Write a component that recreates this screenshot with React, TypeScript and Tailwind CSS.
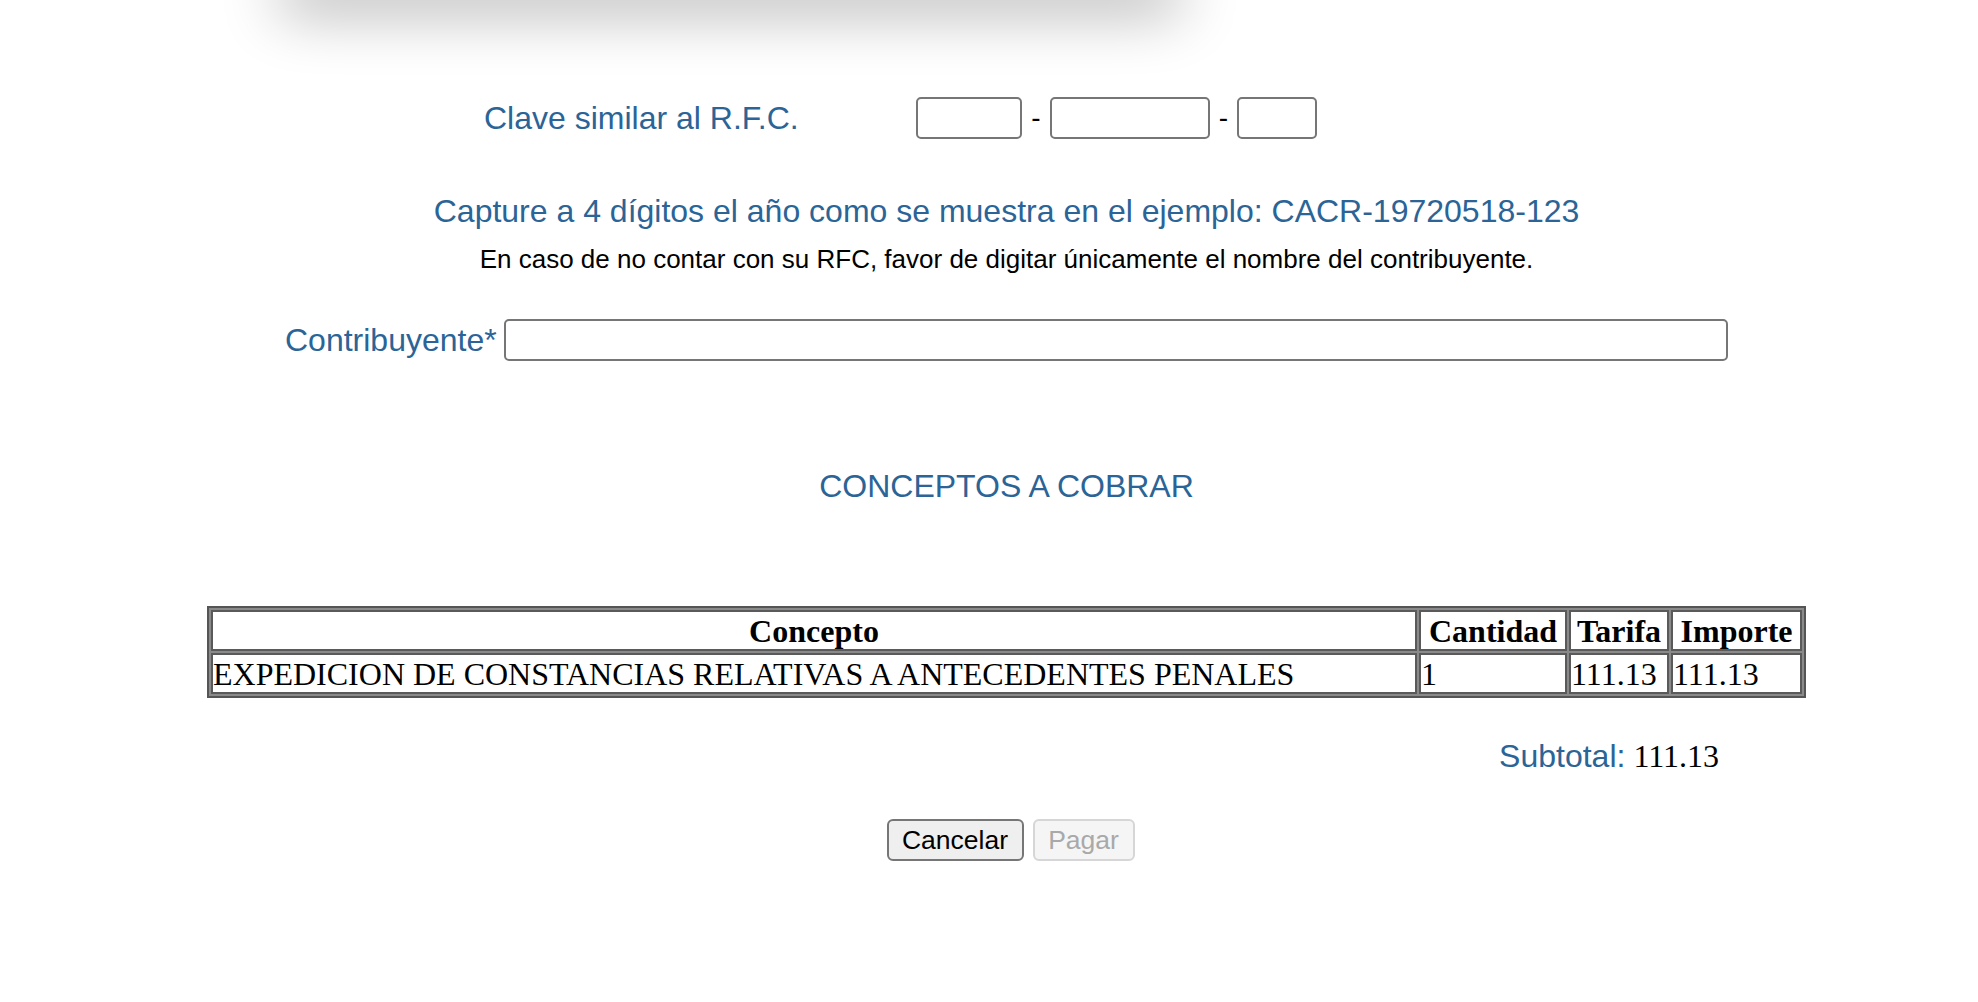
const sans = "font-['Liberation_Sans',Arial,sans-serif]";
const serif = "font-['Liberation_Serif','Times_New_Roman',serif]";

const conceptos = [
  {
    concepto: "EXPEDICION DE CONSTANCIAS RELATIVAS A ANTECEDENTES PENALES",
    cantidad: "1",
    tarifa: "111.13",
    importe: "111.13",
  },
];

function RfcInputs() {
  return (
    <div className="flex items-center">
      <input type="text" className="w-[106px] h-[42px] border-2 border-[#767676] rounded-[5px] bg-white" />
      <span className={`${sans} w-[28px] text-center text-[28px] text-black`}>-</span>
      <input type="text" className="w-[160px] h-[42px] border-2 border-[#767676] rounded-[5px] bg-white" />
      <span className={`${sans} w-[27px] text-center text-[28px] text-black`}>-</span>
      <input type="text" className="w-[80px] h-[42px] border-2 border-[#767676] rounded-[5px] bg-white" />
    </div>
  );
}

export default function App() {
  return (
    <div className={`min-h-screen bg-white overflow-hidden ${sans}`}>
      {/* card above the fold, only its shadow shows */}
      <div className="ml-[280px] w-[900px] h-[40px] -mt-[40px] bg-white shadow-[0_12px_60px_rgba(0,0,0,0.32)]" />

      <div className="pl-[35px]">
        {/* Clave RFC */}
        <div className="mt-[97px] h-[42px] flex items-center pl-[449px]">
          <label className="w-[432px] text-[32px] text-[#2b6496] leading-none">Clave similar al R.F.C.</label>
          <RfcInputs />
        </div>

        <p className="mt-[54px] text-center text-[32px] leading-[36px] text-[#2b6496]">
          Capture a 4 dígitos el año como se muestra en el ejemplo: CACR-19720518-123
        </p>
        <p className="mt-[15px] text-center text-[26px] leading-[30px] text-black">
          En caso de no contar con su RFC, favor de digitar únicamente el nombre del contribuyente.
        </p>

        {/* Contribuyente */}
        <div className="mt-[45px] w-[1443px] mx-auto h-[42px] flex items-center gap-[7px]">
          <label className="text-[32px] text-[#2b6496] leading-none">Contribuyente*</label>
          <input type="text" className="flex-1 h-[42px] border-2 border-[#767676] rounded-[5px] bg-white" />
        </div>

        <h2 className="mt-[107px] text-center text-[32px] leading-[36px] text-[#2b6496]">CONCEPTOS A COBRAR</h2>

        <div className="mt-[102px] w-[1599px] mx-auto">
          <table className={`${serif} w-full border-separate border-spacing-[2px] border-2 border-[#555555] bg-[#8a8a8a] text-[32px] text-black`}>
            <thead>
              <tr className="h-[41px]">
                <th className="bg-white border-2 border-[#5a5a5a] font-bold leading-[36px] px-0">Concepto</th>
                <th className="w-[148px] bg-white border-2 border-[#5a5a5a] font-bold leading-[36px] px-0">Cantidad</th>
                <th className="w-[100px] bg-white border-2 border-[#5a5a5a] font-bold leading-[36px] px-0">Tarifa</th>
                <th className="w-[131px] bg-white border-2 border-[#5a5a5a] font-bold leading-[36px] px-0">Importe</th>
              </tr>
            </thead>
            <tbody>
              {conceptos.map((c) => (
                <tr key={c.concepto} className="h-[41px]">
                  <td className="bg-white border-2 border-[#5a5a5a] leading-[36px] px-0 text-left">{c.concepto}</td>
                  <td className="bg-white border-2 border-[#5a5a5a] leading-[36px] px-0 text-left">{c.cantidad}</td>
                  <td className="bg-white border-2 border-[#5a5a5a] leading-[36px] px-0 text-left">{c.tarifa}</td>
                  <td className="bg-white border-2 border-[#5a5a5a] leading-[36px] px-0 text-left">{c.importe}</td>
                </tr>
              ))}
            </tbody>
          </table>

          <div className="mt-[40px] h-[36px] flex justify-end items-center pr-[87px]">
            <span className="text-[32px] text-[#2b6496]">Subtotal:</span>
            <span className={`${serif} text-[32px] text-black ml-[8px]`}>111.13</span>
          </div>
        </div>

        {/* Acciones */}
        <div className="mt-[45px] flex justify-center gap-[9px] pl-[8px]">
          <button type="button" className="w-[137px] h-[42px] bg-[#efefef] border-2 border-[#767676] rounded-[6px] text-[26.5px] text-black leading-none">
            Cancelar
          </button>
          <button type="button" disabled className="w-[102px] h-[42px] bg-[#f5f5f5] border-2 border-[#d6d6d6] rounded-[6px] text-[26.5px] text-[#a9a9a9] leading-none">
            Pagar
          </button>
        </div>
      </div>
    </div>
  );
}
